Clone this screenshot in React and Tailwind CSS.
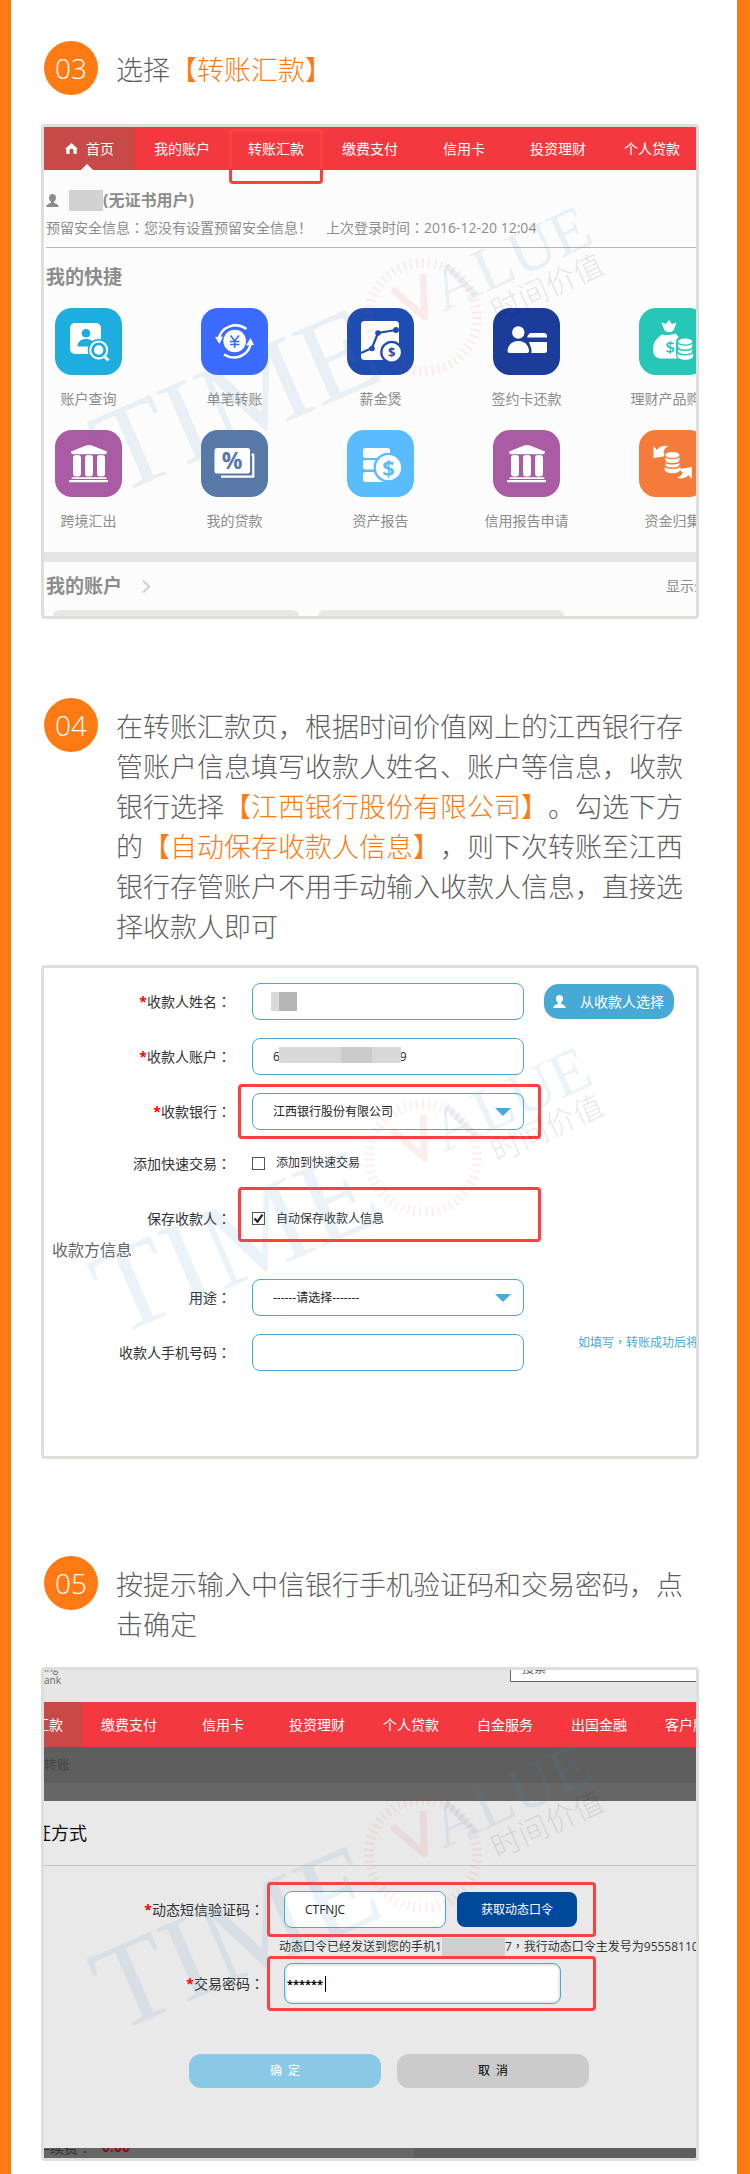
import React from 'react';

const CoinStack = ({ x, y, color }) => (
  <g transform={`translate(${x} ${y})`} fill="#fff">
    <path d="M0 14v4c0 5 15.500 5 15.500 0v-4z" />
    <path d="M0 9v4c0 5 15.500 5 15.500 0V9z" stroke={color} strokeWidth="1.500" />
    <path d="M0 4v4.500c0 5 15.500 5 15.500 0V4z" stroke={color} strokeWidth="1.500" />
    <ellipse cx="7.750" cy="3.500" rx="7.750" ry="3.700" stroke={color} strokeWidth="1.200" />
  </g>
);

const Bank = () => (
  <g fill="#fff">
    <path d="M16 21.500 31 15.500q3-1 6 0L52 21.500V22q-.5 2.300-2 2.300H18q-1.500 0-2-2.300z" />
    <rect x="18" y="25" width="8" height="21.500" rx="3" />
    <rect x="30" y="25" width="8" height="21.500" rx="3" />
    <rect x="42" y="25" width="8" height="21.500" rx="3" />
    <rect x="16.500" y="47.200" width="35" height="1.800" rx=".8" />
    <rect x="14" y="50" width="39" height="2.300" rx="1" />
  </g>
);

const icons = {
  search: (
    <>
      <rect x="15" y="15" width="31" height="31" rx="5" fill="#fff" />
      <circle cx="31" cy="25.300" r="4.300" fill="#1eaddf" />
      <path d="M22.500 38.500c0-5 3.500-7.500 8.500-7.500s8.500 2.500 8.500 7.500z" fill="#1eaddf" />
      <circle cx="43.700" cy="42" r="11" fill="#1eaddf" />
      <circle cx="43.700" cy="42" r="8.500" fill="none" stroke="#fff" strokeWidth="2" />
      <circle cx="43.700" cy="42" r="4.700" fill="#fff" />
      <path d="m49 48 4.500 4.500" stroke="#fff" strokeWidth="2.800" />
    </>
  ),
  transfer: (
    <>
      <circle cx="33.700" cy="33" r="11.300" fill="#fff" />
      <path d="m29.500 27.500 4.200 5.500 4.200-5.500M33.700 33v7M29 33.500h9.500M29 36.500h9.500" fill="none" stroke="#3b6afe" strokeWidth="1.600" />
      <path d="M18 30c2-10 16-17.500 27.500-9" fill="none" stroke="#fff" strokeWidth="2.500" />
      <path d="M14 29l8-.5-3.500 7.500z" fill="#fff" />
      <path d="M23 46.500c11 7 24 1 26.500-10" fill="none" stroke="#fff" strokeWidth="2.500" />
      <path d="M53 37l-8 .5 4.500-7.500z" fill="#fff" />
    </>
  ),
  salary: (
    <>
      <rect x="14" y="13" width="38" height="39" rx="3.500" fill="#fff" />
      <path d="M14 45l11-5 6-15 18-3" fill="none" stroke="#1f4cb0" strokeWidth="2.200" />
      <circle cx="25" cy="40.500" r="2.800" fill="#1f4cb0" />
      <circle cx="31" cy="25" r="2.800" fill="#1f4cb0" />
      <circle cx="49" cy="22" r="3" fill="#1f4cb0" />
      <circle cx="44.700" cy="44.300" r="11.500" fill="#1f4cb0" />
      <circle cx="44.700" cy="44.300" r="9.200" fill="#fff" />
      <text x="44.700" y="49" textAnchor="middle" fontSize="13" fontWeight="700" fill="#1f4cb0">$</text>
    </>
  ),
  card: (
    <>
      <path d="M34 29.500c1-3 2.500-4.500 4-4.500h13c2 0 3 1.500 3 3v1.500zM36 34h18v8.500q0 2.500-2.500 2.500H38z" fill="#fff" />
      <path d="M12.500 42c1-8 6-12 12.500-12s12.500 4 13.500 12q.3 5-4 5H16.500q-4 0-4-5z" fill="#1b3d99" />
      <circle cx="25.300" cy="24.500" r="6.200" fill="#fff" />
      <path d="M14.500 42.500c1-6.500 5.500-9.500 10.800-9.500s9.800 3 10.800 9.500q0 2.500-2.500 2.500H17q-2.500 0-2.500-2.500z" fill="#fff" />
    </>
  ),
  fund: (
    <>
      <path d="M22.500 14.500l4.500 1.500 3-4 3 4 4.500-1.500-3 8q-4.500 3.500-9 0zM23 26.500q7 1.500 13-1 5 3 6 9v16H21q-7-1-7-9c0-7 4-12 9-15z" fill="#fff" />
      <text x="31" y="44.500" textAnchor="middle" fontSize="17" fontWeight="600" fill="#26c7b6">$</text>
      <rect x="37" y="28" width="19" height="25" rx="6" fill="#26c7b6" />
      <CoinStack x={38.5} y={30} color="#26c7b6" />
    </>
  ),
  bank: <Bank />,
  loan: (
    <>
      <rect x="13.500" y="18" width="35.500" height="25.500" rx="2.500" fill="#fff" />
      <path d="M50.500 24.700h1.800v22H20" fill="none" stroke="#fff" strokeWidth="2.200" strokeLinejoin="round" />
      <text x="31" y="39" textAnchor="middle" fontSize="23" fontWeight="700" fill="#5878a7">%</text>
    </>
  ),
  report: (
    <>
      <rect x="16" y="18" width="27" height="10" rx="2.500" fill="#fff" />
      <rect x="16" y="30" width="27" height="9.500" rx="2.500" fill="#fff" />
      <rect x="16" y="42" width="27" height="10" rx="2.500" fill="#fff" />
      <circle cx="41.500" cy="37.700" r="15" fill="#59bcff" />
      <circle cx="41.500" cy="37.700" r="12.600" fill="#fff" />
      <text x="41.500" y="45.500" textAnchor="middle" fontSize="22" fontWeight="700" fill="#59bcff">$</text>
    </>
  ),
  collect: (
    <>
      <path d="M14.500 16l3.500 4c3-4 7-5 11.500-3.500-3.500 1-4.500 3.500-5 6l3 3.500-13 2z" fill="#fff" />
      <CoinStack x={25.7} y={21.5} color="#f57b3a" />
      <path d="M53 37l-13 2 3.500 3.500c-.5 2.500-2 4-5.500 5 4.500 2 9 .5 11.500-2.500l3 4z" fill="#fff" />
    </>
  )
};

const shortcuts = [
  [
    { label: '账户查询', icon: 'search', color: 'bg-[#1eaddf]' },
    { label: '单笔转账', icon: 'transfer', color: 'bg-[#3b6afe]' },
    { label: '薪金煲', icon: 'salary', color: 'bg-[#1f4cb0]' },
    { label: '签约卡还款', icon: 'card', color: 'bg-[#1b3d99]' },
    { label: '理财产品购买', icon: 'fund', color: 'bg-[#26c7b6]' }
  ],
  [
    { label: '跨境汇出', icon: 'bank', color: 'bg-[#a95ba3]' },
    { label: '我的贷款', icon: 'loan', color: 'bg-[#5878a7]' },
    { label: '资产报告', icon: 'report', color: 'bg-[#59bcff]' },
    { label: '信用报告申请', icon: 'bank', color: 'bg-[#a95ba3]' },
    { label: '资金归集', icon: 'collect', color: 'bg-[#f57b3a]' }
  ]
];

const UserIcon = ({ className }) => (
  <svg viewBox="0 0 13 13" className={className} fill="currentColor" aria-hidden="true">
    <path d="M6.500 0C4.300 0 3 1.600 3 3.800c0 1.700.8 3.200 2 4v1C3.500 9.600.5 10 .2 13h12.600c-.3-3-3.300-3.400-4.800-4.200v-1c1.200-.8 2-2.300 2-4C10 1.600 8.700 0 6.500 0z" />
  </svg>
);

// full-width colon set in the middle of its box
const Colon = () => <span className="font-['Noto_Sans_CJK_TC',sans-serif]">：</span>;

const Watermark = ({ className }) => (
  <svg viewBox="0 0 652 488" className={`pointer-events-none absolute left-0 w-[652px] h-[488px] ${className}`} aria-hidden="true">
    <g fill="#4a90c0" fillOpacity="0.110" fontFamily="'Liberation Serif', serif">
      <text transform="translate(72 369) rotate(-23.500)" fontSize="121">TIME</text>
      <text transform="translate(399 185) rotate(-24.500)" fontSize="63">ALUE</text>
    </g>
    <g stroke="#e84040" strokeOpacity="0.090" fill="none">
      <path d="M348 162l32.500 28L379 147" strokeWidth="7" strokeLinejoin="round" />
      <circle cx="379" cy="190" r="54" strokeWidth="10" strokeDasharray="2 4.170" />
    </g>
    <text transform="translate(453 195) rotate(-24.500)" fontSize="30" fill="#000" fillOpacity="0.110" fontFamily="'Noto Sans CJK SC', sans-serif" fontWeight="300">时间价值</text>
  </svg>
);

const Panel = ({ children, className, mark = 'top-0' }) => (
  <div className={`relative ml-[30px] mr-[38px] overflow-hidden rounded-[4px] border-[3px] border-[#dddfda] ${className}`}>
    {children}
    <Watermark className={mark} />
  </div>
);

const StepTitle = ({ no, children }) => (
  <div className="flex items-start pl-[33px] pr-[38px]">
    <span className="flex h-[54px] w-[54px] shrink-0 items-center justify-center rounded-full bg-[#ff7a12] text-[28px] font-light leading-none text-white">{no}</span>
    <h2 className="ml-[18px] mt-[9px] flex-1 text-[27px] font-light leading-10 text-[#5f5f5f] [text-spacing-trim:space-all]">{children}</h2>
  </div>
);

const Mark = ({ children }) => <span className="text-[#ff7a12]">{children}</span>;

const NavItem = ({ children, boxed, className = 'w-[94px]' }) => (
  <a href="#" className={`relative flex h-full shrink-0 items-center justify-center text-sm text-white ${className}`}>
    {children}
    {boxed && <span className="absolute inset-x-0 top-0.5 -bottom-3.5 rounded-[4px] border-[3px] border-[#ff4040]" />}
  </a>
);

const field = 'h-[37px] w-full rounded-[8px] border border-[#47a9d6] bg-transparent px-5 text-xs text-[#222]';

const FormRow = ({ id, label, required, className = 'h-[55px] items-center', children }) => (
  <div className={`flex ${className}`}>
    <label htmlFor={id} className="w-[187px] shrink-0 text-right text-sm text-[#333]">
      {required && <span className="font-bold text-[#f00]">*</span>}
      {label}
      <Colon />
    </label>
    {children}
  </div>
);

const Dropdown = ({ id, children }) => (
  <div className="relative ml-[21px] w-[272px] shrink-0">
    <select id={id} className={`${field} appearance-none`}>
      <option>{children}</option>
    </select>
    <svg viewBox="0 0 16 8" className="pointer-events-none absolute right-[13px] top-[15px] h-2 w-4" fill="#47a9d6" aria-hidden="true">
      <path d="M0 0h16L8 8z" />
    </svg>
  </div>
);

const HomePanel = () => (
  <Panel className="mt-[29px] bg-[#fcfcfc] text-[#8c8c8c]">
    <nav className="flex h-[43px] bg-[#f3393f]">
      <NavItem className="w-[91px] gap-2 bg-[#c94848]">
        <svg viewBox="0 0 13 11" className="h-[11px] w-[13px]" fill="currentColor" aria-hidden="true">
          <path d="M6.500 0L0 6h1.300v5h3.200V7.500c0-2.300 4-2.300 4 0V11h3.200V6H13z" />
        </svg>
        首页
        <svg viewBox="0 0 12 6" className="absolute bottom-0 left-[37px] h-[6px] w-3" fill="#fcfcfc" aria-hidden="true">
          <path d="M6 0l6 6H0z" />
        </svg>
      </NavItem>
      <NavItem>我的账户</NavItem>
      <NavItem boxed>转账汇款</NavItem>
      <NavItem>缴费支付</NavItem>
      <NavItem>信用卡</NavItem>
      <NavItem>投资理财</NavItem>
      <NavItem>个人贷款</NavItem>
    </nav>

    <div className="ml-0.5 border-b border-[#b3b5b6] pb-[7px] pt-[18px]">
      <div className="flex h-6 items-center">
        <UserIcon className="h-[13px] w-[13px]" />
        <span className="ml-2.5 h-[21px] w-[34px] bg-[#d2d2d2]" />
        <span className="text-base font-bold">(无证书用户)</span>
      </div>
      <p className="mt-[3px] flex gap-3.5 whitespace-nowrap text-sm leading-6">
        <span>预留安全信息<Colon />您没有设置预留安全信息！</span>
        <span>上次登录时间<Colon />2016-12-20 12:04</span>
      </p>
    </div>

    <h3 className="ml-0.5 mt-[15px] text-[19px] font-bold leading-7">我的快捷</h3>
    <div className="mt-[17px] flex flex-col gap-5 pl-[11px]">
      {shortcuts.map((row, i) => (
        <div key={i} className="flex gap-[79px]">
          {row.map((item) => (
            <a key={item.label} href="#" className="flex w-[67px] shrink-0 flex-col items-center">
              <span className={`block h-[67px] w-[67px] rounded-[17px] ${item.color}`}>
                <svg viewBox="0 0 67 67" className="h-full w-full" aria-hidden="true">{icons[item.icon]}</svg>
              </span>
              <span className="mt-3 whitespace-nowrap text-sm leading-[23px]">{item.label}</span>
            </a>
          ))}
        </div>
      ))}
    </div>

    <div className="mt-5 h-2.5 bg-[#e5e5e5]" />
    <div className="flex h-12 items-center pl-0.5">
      <h3 className="text-[19px] font-bold">我的账户</h3>
      <svg viewBox="0 0 8 13" className="ml-5 h-[13px] w-2" fill="none" stroke="#cfcfcf" strokeWidth="2" aria-hidden="true">
        <path d="M1 .5l6 6-6 6" />
      </svg>
      <a href="#" className="ml-auto w-[30px] whitespace-nowrap text-sm">显示全部</a>
    </div>
    <div className="flex gap-[19px] pl-[9px]">
      <div className="h-1.5 w-[246px] rounded-t-[12px] bg-[#e8e8e8]" />
      <div className="h-1.5 w-[246px] rounded-t-[12px] bg-[#e8e8e8]" />
    </div>
  </Panel>
);

const TransferPanel = () => (
  <Panel className="mt-[18px] bg-white">
    <form className="pb-[76px] pt-1.5">
      <FormRow id="name" label="收款人姓名" required>
        <div className="relative ml-[21px] w-[272px] shrink-0">
          <input id="name" type="text" className={field} />
          <span className="absolute left-[19px] top-[9px] h-[19px] w-[26px] border-l-8 border-[#d9d9d9] bg-[#b5b5b5]" />
        </div>
        <button type="button" className="ml-5 flex h-[35px] w-[130px] shrink-0 items-center whitespace-nowrap rounded-[15px] bg-[#47a9d6] pl-[9px] text-sm text-white">
          <UserIcon className="mr-3.5 h-[13px] w-[13px]" />
          从收款人选择
        </button>
      </FormRow>
      <FormRow id="account" label="收款人账户" required>
        <div className="relative ml-[21px] w-[272px] shrink-0">
          <input id="account" type="text" defaultValue={'6' + '\u2002'.repeat(20) + '9'} className={field} />
          <span className="absolute left-[27px] top-[9px] h-4 w-[122px] border-l-[62px] border-r-[29px] border-[#d8d8d8] bg-[#cbcbcb]" />
        </div>
      </FormRow>
      <div className="relative">
        <FormRow id="bank" label="收款银行" required>
          <Dropdown id="bank">江西银行股份有限公司</Dropdown>
        </FormRow>
        <span className="pointer-events-none absolute inset-y-0 left-[194px] w-[303px] rounded-[4px] border-[3px] border-[#ff4040]" />
      </div>
      <FormRow id="quick" label="添加快速交易" className="h-12 items-center">
        <input id="quick" type="checkbox" className="ml-[21px] h-[13px] w-[13px] appearance-none border border-[#555] bg-white" />
        <label htmlFor="quick" className="ml-[11px] text-xs text-[#333]">添加到快速交易</label>
      </FormRow>
      <div className="relative">
        <FormRow id="save" label="保存收款人" className="h-[55px] items-center pt-2">
          <span className="relative ml-[21px] flex">
            <input id="save" type="checkbox" defaultChecked className="h-[13px] w-[13px] appearance-none border border-[#555] bg-white" />
            <svg viewBox="0 0 13 13" className="pointer-events-none absolute inset-0" fill="none" stroke="#222" strokeWidth="2.200" aria-hidden="true">
              <path d="M2.500 6.500l3 3.200 5-7" />
            </svg>
          </span>
          <label htmlFor="save" className="ml-[11px] text-xs text-[#333]">自动保存收款人信息</label>
        </FormRow>
        <span className="pointer-events-none absolute inset-y-0 left-[194px] w-[303px] rounded-[4px] border-[3px] border-[#ff4040]" />
      </div>
      <h3 className="ml-2 text-base leading-4 text-[#666]">收款方信息</h3>
      <div className="mt-3">
        <FormRow id="usage" label="用途">
          <Dropdown id="usage">------请选择-------</Dropdown>
        </FormRow>
      </div>
      <FormRow id="phone" label="收款人手机号码">
        <input id="phone" type="text" className={`ml-[21px] max-w-[272px] shrink-0 ${field}`} />
        <span className="ml-[54px] mt-2 self-start whitespace-nowrap text-xs leading-[18px] text-[#47a9d6]">如填写<span className="font-['Noto_Sans_CJK_TC',sans-serif]">，</span>转账成功后将</span>
      </FormRow>
    </form>
  </Panel>
);

const ConfirmPanel = () => (
  <Panel className="mt-[22px] bg-[#e9e9e9]" mark="-top-1.5">
    <div className="flex h-8 justify-between bg-[#e6e6e6]">
      <span className="-mt-2 text-[10px] leading-3 text-[#666]">ing<br />ank</span>
      <div className="h-3 w-[186px] overflow-hidden border-b border-l border-[#666] bg-white pl-[11px]">
        <input type="text" aria-label="搜索" placeholder="搜索" className="-mt-2 block h-3 w-full text-xs leading-3 placeholder:text-[#555]" />
      </div>
    </div>
    <nav className="flex h-[45px] bg-[#f3393f]">
      <NavItem className="-ml-14 w-[94px] bg-[#c94848]">转账汇款</NavItem>
      <NavItem>缴费支付</NavItem>
      <NavItem>信用卡</NavItem>
      <NavItem>投资理财</NavItem>
      <NavItem>个人贷款</NavItem>
      <NavItem>白金服务</NavItem>
      <NavItem>出国金融</NavItem>
      <NavItem>客户服务</NavItem>
    </nav>
    <div className="flex h-9 items-center bg-[#5e5e5e] text-[13px] text-[#454545]">转账</div>
    <div className="h-[18px] bg-[#666]" />
    <h3 className="-ml-[11px] border-b border-[#c4c4c4] pb-[18px] pt-[18px] text-lg text-[#111]">证方式</h3>

    <form className="pt-4">
      <div className="flex h-[55px]">
        <label htmlFor="code" className="w-[220px] shrink-0 self-center text-right text-sm text-[#333]">
          <span className="font-bold text-[#f00]">*</span>动态短信验证码<Colon />
        </label>
        <div className="ml-[3px] flex w-[329px] shrink-0 items-center rounded-[4px] border-[3px] border-[#ff4040] pl-3.5">
          <input id="code" type="text" defaultValue="CTFNJC" className="h-[37px] w-[162px] rounded-[8px] border border-[#47a9d6] bg-white px-5 text-xs text-[#222]" />
          <button type="button" className="ml-[11px] h-[35px] w-[120px] rounded-[8px] bg-[#00499a] text-xs text-white">获取动态口令</button>
        </div>
      </div>
      <p className="ml-[235px] flex h-[19px] items-center whitespace-nowrap text-xs text-[#333]">
        动态口令已经发送到您的手机1
        <span className="h-[18px] w-[63px] shrink-0 bg-[#cfcfcf]" />
        <span>7<span className="font-['Noto_Sans_CJK_TC',sans-serif]">，</span>我行动态口令主发号为955581100</span>
      </p>
      <div className="flex h-[55px]">
        <label htmlFor="password" className="w-[220px] shrink-0 self-center text-right text-sm text-[#333]">
          <span className="font-bold text-[#f00]">*</span>交易密码<Colon />
        </label>
        <div className="ml-[3px] flex w-[329px] shrink-0 items-center rounded-[4px] border-[3px] border-[#ff4040] pl-3.5">
          <div className="relative rounded-[8px] border border-[#47a9d6] p-0.5">
            <input id="password" type="text" defaultValue="******" className="block h-[35px] w-[271px] rounded-[4px] bg-white text-[11px] font-bold text-black" />
            <span className="absolute left-10 top-3 h-4 w-px bg-black" />
          </div>
        </div>
      </div>
      <div className="flex justify-start gap-4 pb-[60px] pl-[145px] pt-[43px]">
        <button type="button" className="h-[34px] w-[192px] rounded-[12px] bg-[#8ac9e5] text-xs text-white">确&ensp;定</button>
        <button type="button" className="h-[34px] w-[192px] rounded-[12px] bg-[#cbcbcb] text-xs text-black">取&ensp;消</button>
      </div>
    </form>

    <div className="flex h-2.5 overflow-hidden bg-[#5e5e5e] text-sm leading-[14px]">
      <div className="flex w-[370px] bg-[#666]">
        <span className="-ml-2 -mt-2 text-[#2e2e2e]">手续费<Colon /></span>
        <span className="-mt-2 ml-2.5 font-bold text-[#8e0b12]">0.00</span>
      </div>
    </div>
  </Panel>
);

export default function App() {
  return (
    <main className="border-l-[11px] border-r-[13px] border-[#ff7a12] bg-white pb-[13px] pt-[41px] font-['Open_Sans','Noto_Sans_CJK_SC',sans-serif]">
      <section>
        <StepTitle no="03">选择<Mark>【转账汇款】</Mark></StepTitle>
        <HomePanel />
      </section>
      <section className="mt-[79px]">
        <StepTitle no="04">
          在转账汇款页，根据时间价值网上的江西银行存管账户信息填写收款人姓名、账户等信息，收款银行选择<Mark>【江西银行股份有限公司】</Mark>。勾选下方的<Mark>【自动保存收款人信息】</Mark>，则下次转账至江西银行存管账户不用手动输入收款人信息，直接选择收款人即可
        </StepTitle>
        <TransferPanel />
      </section>
      <section className="mt-[97px]">
        <StepTitle no="05">按提示输入中信银行手机验证码和交易密码，点击确定</StepTitle>
        <ConfirmPanel />
      </section>
    </main>
  );
}
